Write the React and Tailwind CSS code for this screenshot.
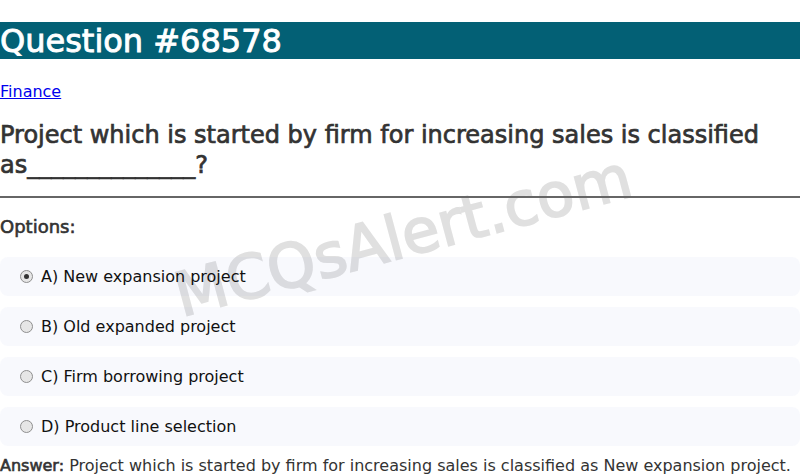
import React from "react";

const OPTIONS = [
  { id: "A", text: "New expansion project", checked: true },
  { id: "B", text: "Old expanded project" },
  { id: "C", text: "Firm borrowing project" },
  { id: "D", text: "Product line selection" },
];

const Radio = ({ checked }) => (
  <span className="inline-flex w-[13px] h-[13px] rounded-full border border-[#8f8f8f] bg-[#e6e6e6] items-center justify-center shrink-0">
    {checked && <span className="w-[5px] h-[5px] rounded-full bg-[#333]" />}
  </span>
);

export default function App() {
  return (
    <div className="relative w-[800px] h-[476px] overflow-hidden bg-white font-['DejaVu_Sans',sans-serif]">
      {/* watermark behind content */}
      <div className="absolute inset-0 flex items-center justify-center pointer-events-none">
        <div className="-mt-[6px] ml-[6px] -rotate-[15deg] text-[61px] font-normal [-webkit-text-stroke:1.8px_#e0e0e0] text-[#e0e0e0] leading-none">
          MCQsAlert.com
        </div>
      </div>

      <div className="relative">
        <div className="mt-[22px] h-[37px] bg-[#036075] flex items-center">
          <h1 className="text-[32px] font-normal [-webkit-text-stroke:0.9px_white] text-white leading-none">Question #68578</h1>
        </div>

        <div className="mt-[23px] text-[16px] leading-[20px]">
          <a href="#" className="text-[#0000ee] underline">Finance</a>
        </div>

        <h2 className="mt-[18px] text-[24px] font-normal [-webkit-text-stroke:0.7px_#333] leading-[30px] text-[#333]">
          Project which is started by firm for increasing sales is classified as______________?
        </h2>

        <hr className="mt-[16px] border-t-2 border-[#666]" />

        <h3 className="mt-[18px] text-[18px] font-normal [-webkit-text-stroke:0.6px_#333] text-[#333] leading-[22px]">Options:</h3>

        <div className="mt-[19px] flex flex-col gap-[11px]">
          {OPTIONS.map((o) => (
            <div key={o.id} className="h-[39px] bg-[#4060c0]/[0.04] rounded-[8px] flex items-center pl-[20px] gap-[8px] text-[16px] text-[#111]">
              <Radio checked={o.checked} />
              <span>{o.id}) {o.text}</span>
            </div>
          ))}
        </div>

        <p className="mt-[10px] text-[16px] text-[#333] leading-[20px]">
          <span className="[-webkit-text-stroke:0.6px_#333]">Answer:</span> Project which is started by firm for increasing sales is classified as New expansion project.
        </p>
      </div>
    </div>
  );
}
